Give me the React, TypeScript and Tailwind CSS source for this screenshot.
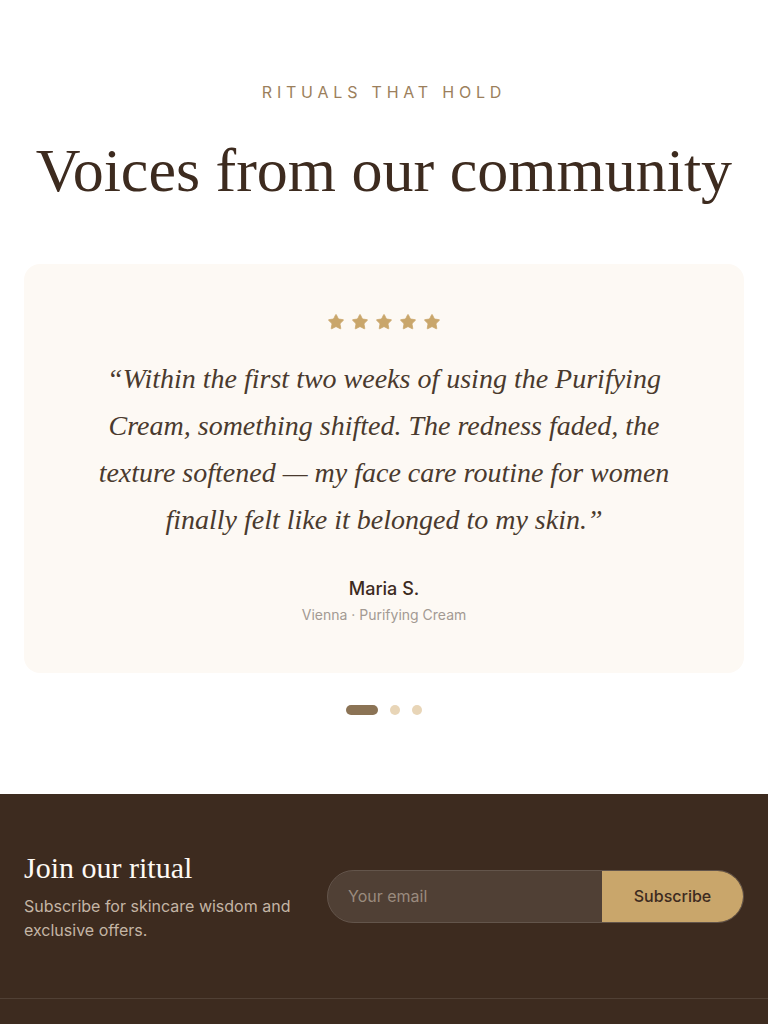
import { Star } from 'lucide-react';

const serif = { fontFamily: '"Liberation Serif", "DejaVu Serif", serif' };

export default function App() {
  return (
    <div className="min-h-screen bg-white" style={{ fontFamily: 'Inter, "Noto Sans", sans-serif' }}>
      <section className="px-6 pt-20 pb-[79px] text-center">
        <p className="text-base leading-6 uppercase tracking-[0.3em] text-[#9c7f5c]">Rituals that hold</p>
        <h2 className="mt-[29px] text-[62px] leading-[74px] text-[#3d2b1f]" style={serif}>Voices from our community</h2>

        <div className="mt-[57px] rounded-2xl bg-[#fdf9f4] px-12 pt-[49px] pb-12">
          <div className="flex justify-center gap-1.5">
            {[0, 1, 2, 3, 4].map(i => (
              <Star key={i} className="w-[18px] h-[18px] fill-[#c9a66b] text-[#c9a66b]" strokeWidth={1} />
            ))}
          </div>
          <blockquote className="mx-auto mt-[24px] max-w-[590px] text-[28px] italic leading-[47px] text-[#4a3a2e]" style={serif}>
            “Within the first two weeks of using the Purifying Cream, something shifted. The redness faded, the texture softened — my face care routine for women finally felt like it belonged to my skin.”
          </blockquote>
          <p className="mt-8 text-lg font-medium text-[#3d2b1f]">Maria S.</p>
          <p className="mt-0.5 text-sm text-[#a39a93]">Vienna · Purifying Cream</p>
        </div>

        <div className="mt-8 flex items-center justify-center gap-3">
          <span className="h-2.5 w-8 rounded-full bg-[#8b7355]" />
          <span className="h-2.5 w-2.5 rounded-full bg-[#e8d5b7]" />
          <span className="h-2.5 w-2.5 rounded-full bg-[#e8d5b7]" />
        </div>
      </section>

      <footer className="bg-[#3d2b1f]">
        <div className="flex items-center gap-8 px-6 py-14">
          <div className="flex-1">
            <h3 className="text-[30px] leading-9 text-[#fdf9f4]" style={serif}>Join our ritual</h3>
            <p className="mt-2 text-base leading-6 text-[#c4b5a5]">Subscribe for skincare wisdom and exclusive offers.</p>
          </div>
          <form className="flex h-[53px] w-[417px] overflow-hidden rounded-full border border-white/20">
            <input
              placeholder="Your email"
              className="min-w-0 flex-1 bg-white/10 px-5 text-base text-white placeholder:text-[#9a8b7e] outline-none"
            />
            <button type="button" className="w-[141px] bg-[#c9a66b] text-base font-medium text-[#3d2b1f]">Subscribe</button>
          </form>
        </div>
        <div className="border-t border-white/10 h-[60px]" />
      </footer>
    </div>
  );
}
